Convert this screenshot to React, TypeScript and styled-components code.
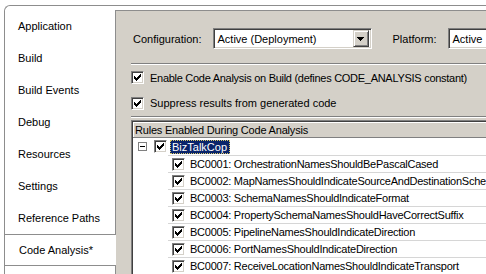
import React from "react";
import styled, { createGlobalStyle } from "styled-components";

const GlobalStyle = createGlobalStyle`
  html, body {
    margin: 0;
    padding: 0;
    background: #ffffff;
    overflow: hidden;
  }
  body {
    font-family: "Liberation Sans", Arial, sans-serif;
    font-size: 11px;
    color: #000;
  }
`;

const Page = styled.div`
  width: 486px;
  height: 274px;
  padding: 5px 0 0 4px;
  box-sizing: border-box;
  overflow: hidden;
  background: #ffffff;
`;

const Frame = styled.div`
  display: flex;
  height: 100%;
  padding-top: 4px;
  box-sizing: border-box;
  border-top: 1px solid #8d8d8d;
  border-left: 1px solid #8d8d8d;
  border-top-left-radius: 6px;
  background: #ffffff;
`;

const TabList = styled.div`
  display: flex;
  flex-direction: column;
  width: 110px;
  flex-shrink: 0;
`;

const Tab = styled.div<{ $active?: boolean }>`
  height: 32px;
  display: flex;
  align-items: center;
  box-sizing: border-box;
  background: #ffffff;
  white-space: nowrap;
  position: relative;
  z-index: ${(p) => (p.$active ? 1 : 0)};
  margin-right: ${(p) => (p.$active ? "-1px" : "0")};
  margin-left: ${(p) => (p.$active ? "-1px" : "0")};
  padding-left: ${(p) => (p.$active ? "14px" : "13px")};
  border-top: ${(p) => (p.$active ? "1px solid #8d8d8d" : "none")};
  border-bottom: ${(p) => (p.$active ? "1px solid #8d8d8d" : "none")};
  border-left: ${(p) => (p.$active ? "1px solid #8d8d8d" : "none")};
`;

const TabFill = styled.div`
  flex: 1;
`;

const Content = styled.div`
  flex: 1;
  display: flex;
  flex-direction: column;
  background: #d4d0c8;
  border-top: 1px solid #8d8d8d;
  border-left: 1px solid #8d8d8d;
  padding-left: 15px;
  overflow: hidden;
  min-width: 0;
`;

const ConfigRow = styled.div`
  display: flex;
  align-items: center;
  height: 21px;
  margin-top: 17px;
  white-space: nowrap;
`;

const Label = styled.span<{ $gap?: number }>`
  margin-left: ${(p) => p.$gap ?? 0}px;
`;

const Select = styled.div<{ $width?: number; $gap?: number }>`
  display: flex;
  align-items: center;
  flex-shrink: 0;
  height: 21px;
  width: ${(p) => (p.$width ? `${p.$width}px` : "auto")};
  margin-left: ${(p) => p.$gap ?? 0}px;
  box-sizing: border-box;
  background: #fff;
  border-top: 1px solid #808080;
  border-left: 1px solid #808080;
  border-right: 1px solid #ffffff;
  border-bottom: 1px solid #ffffff;
  box-shadow: inset 1px 1px 0 #404040, inset -1px -1px 0 #d4d0c8;
  padding: 2px 2px 2px 4px;
`;

const SelectText = styled.span`
  flex: 1;
  white-space: nowrap;
`;

const DropButton = styled.div`
  width: 16px;
  height: 17px;
  box-sizing: border-box;
  background: #d4d0c8;
  border-top: 1px solid #d4d0c8;
  border-left: 1px solid #d4d0c8;
  border-right: 1px solid #404040;
  border-bottom: 1px solid #404040;
  box-shadow: inset 1px 1px 0 #ffffff, inset -1px -1px 0 #808080;
  display: flex;
  align-items: center;
  justify-content: center;
`;

const Etched = styled.div<{ $top: number }>`
  margin-top: ${(p) => p.$top}px;
  height: 0;
  border-top: 1px solid #808080;
  border-bottom: 1px solid #ffffff;
`;

const CheckRow = styled.div`
  display: flex;
  align-items: center;
  height: 26px;
  white-space: nowrap;
`;

const CheckText = styled.span<{ $squeeze?: number }>`
  margin-left: 6px;
  letter-spacing: ${(p) => p.$squeeze ?? 0}px;
`;

const Box = styled.div`
  width: 13px;
  height: 13px;
  flex-shrink: 0;
  box-sizing: border-box;
  background: #ffffff;
  border-top: 1px solid #808080;
  border-left: 1px solid #808080;
  border-right: 1px solid #ffffff;
  border-bottom: 1px solid #ffffff;
  box-shadow: inset 1px 1px 0 #404040, inset -1px -1px 0 #d4d0c8;
  display: flex;
  align-items: center;
  justify-content: center;
`;

const ListBox = styled.div`
  margin-top: 2px;
  flex: 1;
  margin-right: -20px;
  background: #ffffff;
  border-top: 1px solid #808080;
  border-left: 1px solid #808080;
  box-shadow: inset 1px 1px 0 #404040;
  padding: 1px 0 0 1px;
  display: flex;
  flex-direction: column;
  white-space: nowrap;
`;

const Header = styled.div`
  height: 16px;
  box-sizing: border-box;
  background: #d4d0c8;
  border-bottom: 1px solid #808080;
  box-shadow: inset 1px 1px 0 #ffffff;
  display: flex;
  align-items: center;
  padding-left: 2px;
  letter-spacing: -0.2px;
`;

const TreeRow = styled.div<{ $indent: number }>`
  height: 17px;
  display: flex;
  align-items: center;
  padding-left: ${(p) => p.$indent}px;
`;

const ChildRow = styled.div`
  height: 17px;
  display: flex;
  align-items: center;
  margin-left: 35px;
  padding-left: 4px;
  border-top: 1px solid #d6d6d6;
  box-sizing: border-box;
  letter-spacing: -0.25px;
`;

const Expander = styled.div`
  width: 9px;
  height: 9px;
  box-sizing: border-box;
  border: 1px solid #808080;
  background: #fff;
  display: flex;
  align-items: center;
  justify-content: center;
  margin-right: 7px;
`;

const Minus = styled.div`
  width: 5px;
  height: 1px;
  background: #000;
`;

const Selected = styled.span`
  margin-left: 3px;
  padding: 1px 3px 1px 2px;
  background: #0a246a;
  color: #ffffff;
  outline: 1px dotted #d8c86a;
  outline-offset: -1px;
`;

const ItemText = styled.span`
  margin-left: 5px;
`;

const Check = () => (
  <Box>
    <svg width="7" height="7" viewBox="0 0 7 7" shapeRendering="crispEdges">
      <path
        d="M6 0h1v3h-1v1h-1v1h-1v1h-1v1h-1v-1h-1v-1h-1v-3h1v1h1v1h1v-1h1v-1h1z"
        fill="#000"
      />
    </svg>
  </Box>
);

const tabs = [
  "Application",
  "Build",
  "Build Events",
  "Debug",
  "Resources",
  "Settings",
  "Reference Paths",
  "Code Analysis*",
];

const rules = [
  "BC0001: OrchestrationNamesShouldBePascalCased",
  "BC0002: MapNamesShouldIndicateSourceAndDestinationSchemas",
  "BC0003: SchemaNamesShouldIndicateFormat",
  "BC0004: PropertySchemaNamesShouldHaveCorrectSuffix",
  "BC0005: PipelineNamesShouldIndicateDirection",
  "BC0006: PortNamesShouldIndicateDirection",
  "BC0007: ReceiveLocationNamesShouldIndicateTransport",
];

const App: React.FC = () => {
  return (
    <Page>
      <GlobalStyle />
      <Frame>
        <TabList>
          {tabs.map((t) => (
            <Tab key={t} $active={t === "Code Analysis*"}>
              {t}
            </Tab>
          ))}
          <TabFill />
        </TabList>
        <Content>
          <ConfigRow>
            <Label $gap={2}>Configuration:</Label>
            <Select $width={159} $gap={11}>
              <SelectText>Active (Deployment)</SelectText>
              <DropButton>
                <svg width="7" height="4" viewBox="0 0 7 4" shapeRendering="crispEdges">
                  <path d="M0 0h7v1h-1v1h-1v1h-1v1h-1v-1h-1v-1h-1v-1h-1z" fill="#000" />
                </svg>
              </DropButton>
            </Select>
            <Label $gap={21}>Platform:</Label>
            <Select $width={80} $gap={11}>
              <SelectText>Active</SelectText>
            </Select>
          </ConfigRow>
          <Etched $top={14} />
          <CheckRow>
            <Check />
            <CheckText $squeeze={-0.28}>
              Enable Code Analysis on Build (defines CODE_ANALYSIS constant)
            </CheckText>
          </CheckRow>
          <CheckRow>
            <Check />
            <CheckText>Suppress results from generated code</CheckText>
          </CheckRow>
          <Etched $top={0} />
          <ListBox>
            <Header>Rules Enabled During Code Analysis</Header>
            <TreeRow $indent={5}>
              <Expander>
                <Minus />
              </Expander>
              <Check />
              <Selected>BizTalkCop</Selected>
            </TreeRow>
            {rules.map((r) => (
              <ChildRow key={r}>
                <Check />
                <ItemText>{r}</ItemText>
              </ChildRow>
            ))}
          </ListBox>
        </Content>
      </Frame>
    </Page>
  );
};

export default App;
